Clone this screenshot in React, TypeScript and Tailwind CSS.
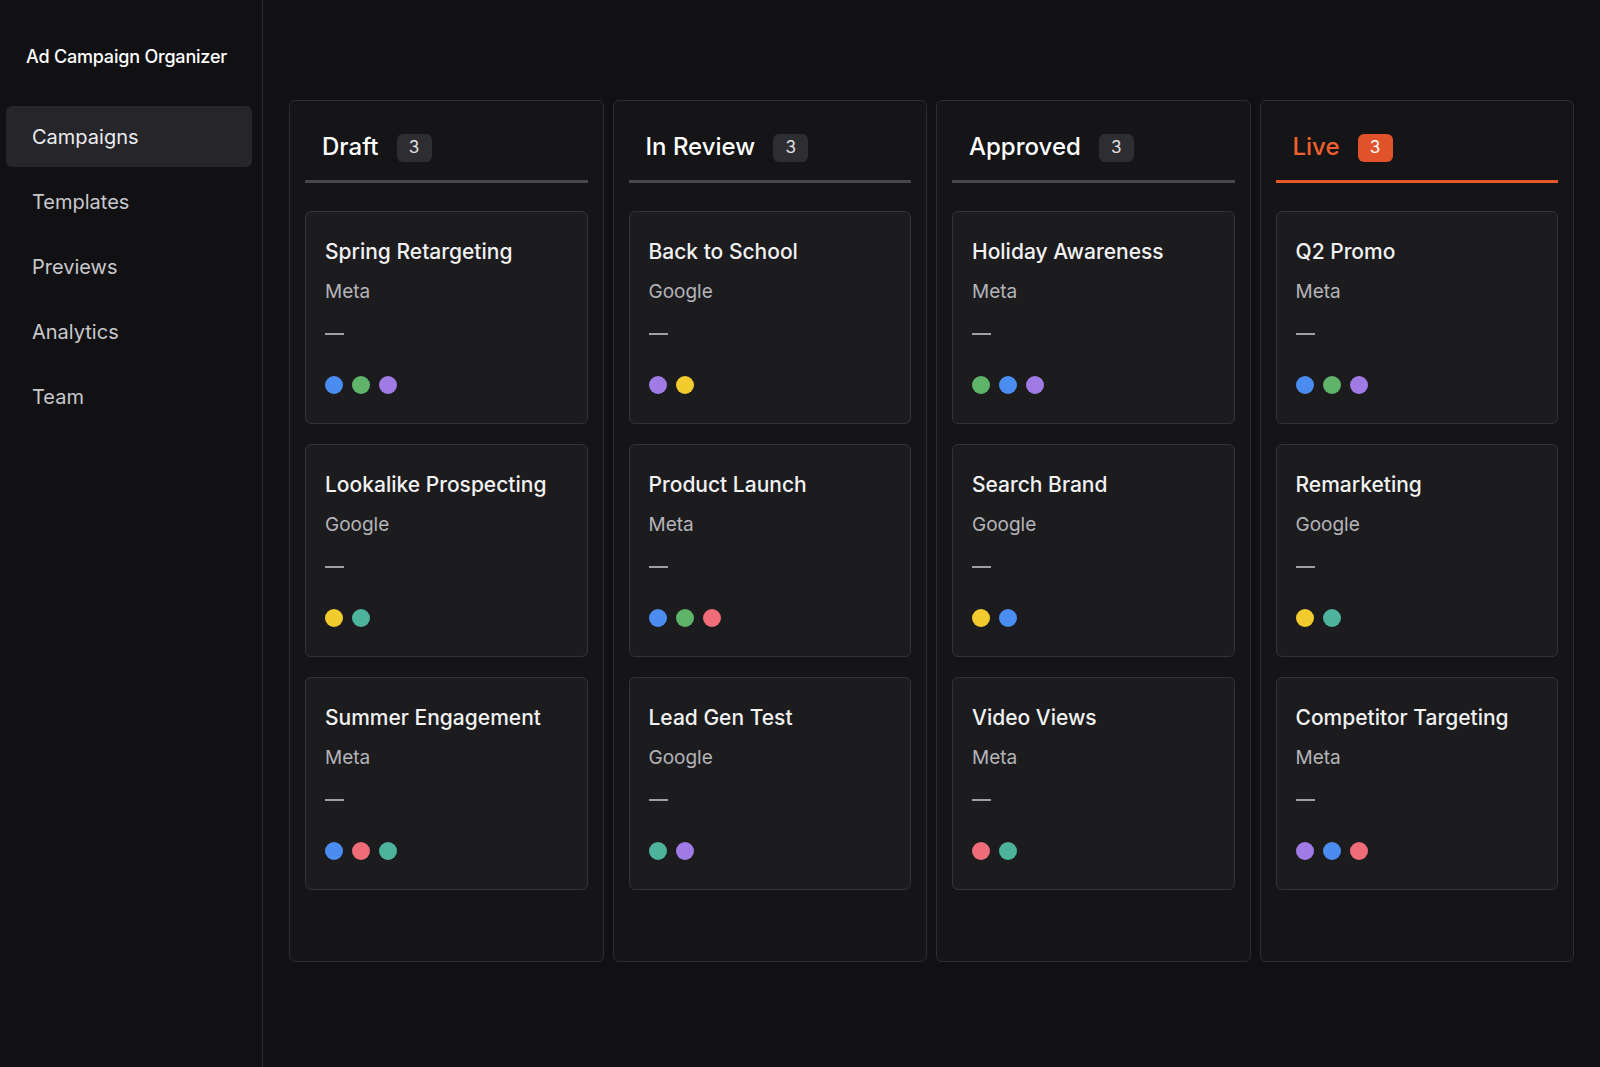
import React from "react";

const C: Record<string, string> = {
  b: "bg-[#4a8cf0]", g: "bg-[#5fb46a]", p: "bg-[#a07be6]", y: "bg-[#f2cb2e]", t: "bg-[#4db39c]", r: "bg-[#ee6d78]",
};

const cols = [
  { name: "Draft", live: false, cards: [["Spring Retargeting", "Meta", "bgp"], ["Lookalike Prospecting", "Google", "yt"], ["Summer Engagement", "Meta", "brt"]] },
  { name: "In Review", live: false, cards: [["Back to School", "Google", "py"], ["Product Launch", "Meta", "bgr"], ["Lead Gen Test", "Google", "tp"]] },
  { name: "Approved", live: false, cards: [["Holiday Awareness", "Meta", "gbp"], ["Search Brand", "Google", "yb"], ["Video Views", "Meta", "rt"]] },
  { name: "Live", live: true, cards: [["Q2 Promo", "Meta", "bgp"], ["Remarketing", "Google", "yt"], ["Competitor Targeting", "Meta", "pbr"]] },
];

export default function App() {
  return (
    <div className="flex h-[1067px] w-[1600px] bg-[#111113] text-white" style={{ fontFamily: "Inter, 'Noto Sans', sans-serif" }}>
      <aside className="w-[263px] shrink-0 border-r border-[#2c2c2f] pl-[6px] pr-[10px]">
        <div className="pl-[20px] pt-[43px] text-[18px] font-medium tracking-[-0.2px]">Ad Campaign Organizer</div>
        <nav className="mt-[36px] flex flex-col gap-[4px] text-[20px] text-[#c8c8cc]">
          {["Campaigns", "Templates", "Previews", "Analytics", "Team"].map((n, i) => (
            <div key={n} className={`flex h-[61px] items-center rounded-[6px] pl-[26px] ${i === 0 ? "bg-[#26262a] text-[#ececee]" : ""}`}>{n}</div>
          ))}
        </nav>
      </aside>
      <main className="flex flex-1 gap-[9px] pl-[26px] pr-[26px] pt-[100px] pb-[105px]">
        {cols.map((c) => (
          <div key={c.name} className="flex flex-1 flex-col rounded-[6px] border border-[#2d2d30] bg-[#151517] px-[15px]">
            <div className={`flex h-[82px] items-end gap-[18px] border-b-[3px] pb-[15px] pl-[17px] ${c.live ? "border-[#e8582a]" : "border-[#48484c]"}`}>
              <span className={`text-[24px] font-medium ${c.live ? "text-[#f0612e]" : ""}`}>{c.name}</span>
              <span className={`mb-[3px] flex h-[28px] w-[35px] items-center justify-center rounded-[6px] text-[17px] ${c.live ? "bg-[#e0522a] text-white" : "bg-[#2e2e32] text-[#e0e0e0]"}`}>3</span>
            </div>
            <div className="mt-[28px] flex flex-col gap-[20px]">
              {c.cards.map(([t, p, d]) => (
                <div key={t} className="h-[213px] rounded-[6px] border border-[#333337] bg-[#1c1c1f] px-[19px] pt-[24px]">
                  <div className="text-[21px] font-medium text-[#f2f2f2]">{t}</div>
                  <div className="mt-[10px] text-[19px] text-[#b4b4b8]">{p}</div>
                  <div className="mt-[27px] h-[2px] w-[19px] bg-[#a0a0a4]" />
                  <div className="mt-[41px] flex gap-[9px]">
                    {d.split("").map((k, i) => <span key={i} className={`h-[18px] w-[18px] rounded-full ${C[k]}`} />)}
                  </div>
                </div>
              ))}
            </div>
          </div>
        ))}
      </main>
    </div>
  );
}
